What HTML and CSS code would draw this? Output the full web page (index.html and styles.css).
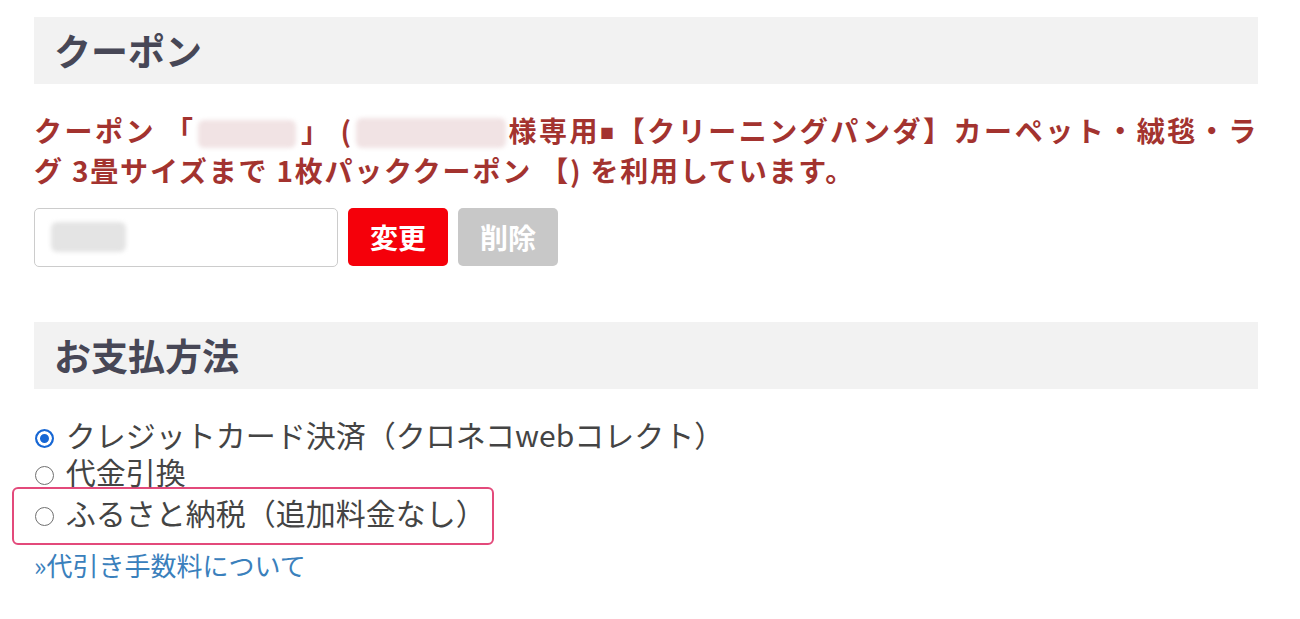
FILE: index.html
```html
<!DOCTYPE html>
<html lang="ja">
    <head>
        <meta charset="UTF-8">
        <meta name="viewport" content="width=device-width, initial-scale=1.0">
        <title>お支払い</title>

        <link rel="stylesheet" href="styles.css">

    </head>
    <body>
        <main class="page">
            <section class="block">
                <h2 class="block-title">クーポン</h2>

                <p class="coupon-note"><span class="full-line">クーポン 「<span class="blur blur-code"></span>」 (<span class="blur blur-name"></span>様専用<span class="sq">■</span>【クリーニングパンダ】カーペット・絨毯・ラ</span>グ 3畳サイズまで 1枚パッククーポン 【) を利用しています。</p>

                <form class="coupon-form">
                    <div class="coupon-input"><span class="blur blur-input"></span></div>
                    <button type="button" class="btn btn-change">変更</button>
                    <button type="button" class="btn btn-delete">削除</button>
                </form>
            </section>

            <section class="block">
                <h2 class="block-title">お支払方法</h2>

                <ul class="pay-list">
                    <li><label><input type="radio" name="pay" checked> クレジットカード決済（クロネコwebコレクト）</label></li>
                    <li><label><input type="radio" name="pay"> 代金引換</label></li>
                    <li class="marked"><label><input type="radio" name="pay"> ふるさと納税（追加料金なし）</label></li>
                </ul>

                <a href="#" class="fee-link">»代引き手数料について</a>
            </section>
        </main>
    </body>
</html>
```

FILE: styles.css
```css
* {
    box-sizing: border-box;
}

body {
    margin: 0;
    background: #fff;
    font-family: "Noto Sans CJK JP", "Noto Sans", sans-serif;
}

.page {
    width: 1224px;
    margin-left: 34px;
    padding-top: 17px;
}

.block-title {
    margin: 0;
    height: 67px;
    padding: 0 20px;
    background-color: #f2f2f2;
    color: #474756;
    font-size: 37px;
    font-weight: bold;
    line-height: 67px;
}

.coupon-note {
    margin: 26px 0 0;
    color: #a3332f;
    font-size: 28px;
    font-weight: bold;
    line-height: 40px;
    letter-spacing: 1.8px;
}

/* the first line is spread to the full width like the original */
.full-line {
    display: block;
    text-align: justify;
    text-align-last: justify;
}

.sq {
    font-size: 14px;
    line-height: 1;
    vertical-align: 4px;
}

.blur {
    display: inline-block;
    vertical-align: -6px;
    border-radius: 6px;
    filter: blur(2px);
}

.blur-code {
    width: 98px;
    height: 28px;
    margin: 0 4px 0 3px;
    background: #f1e3e4;
}

.blur-name {
    width: 150px;
    height: 30px;
    margin: 0 2px 0 3px;
    background: #f1e3e4;
}

.coupon-form {
    display: flex;
    gap: 10px;
    margin-top: 18px;
}

.coupon-input {
    width: 304px;
    height: 59px;
    border: 1px solid #ccc;
    border-radius: 5px;
    padding: 13px 16px;
}

.blur-input {
    width: 75px;
    height: 30px;
    vertical-align: top;
    background: #e4e4e4;
}

.btn {
    width: 100px;
    height: 58px;
    border: none;
    border-radius: 5px;
    color: #fff;
    font-family: inherit;
    font-size: 28px;
    font-weight: bold;
}

.btn-change {
    background-color: #f5000a;
}

.btn-delete {
    background-color: #c8c8c8;
}

.block + .block {
    margin-top: 55px;
}

.pay-list {
    list-style: none;
    margin: 27px 0 0;
    padding: 0;
    color: #444;
    font-size: 30px;
    line-height: 37px;
}

.pay-list input {
    appearance: none;
    width: 19px;
    height: 19px;
    margin: 0 5px 0 1px;
    vertical-align: -1px;
    border: 1.5px solid #707070;
    border-radius: 50%;
    background: #fff;
}

.pay-list input:checked {
    border: 2px solid #1767d4;
    background: #1767d4;
    box-shadow: inset 0 0 0 3px #fff;
}

.marked {
    margin: -3px 0 0 -22px;
    width: 482px;
    padding: 5px 0 12px 20px;
    border: 2px solid #e34a7b;
    border-radius: 6px;
}

.fee-link {
    display: block;
    margin-top: 2px;
    color: #3a80bc;
    font-size: 26px;
    line-height: 36px;
    text-decoration: none;
}
```
